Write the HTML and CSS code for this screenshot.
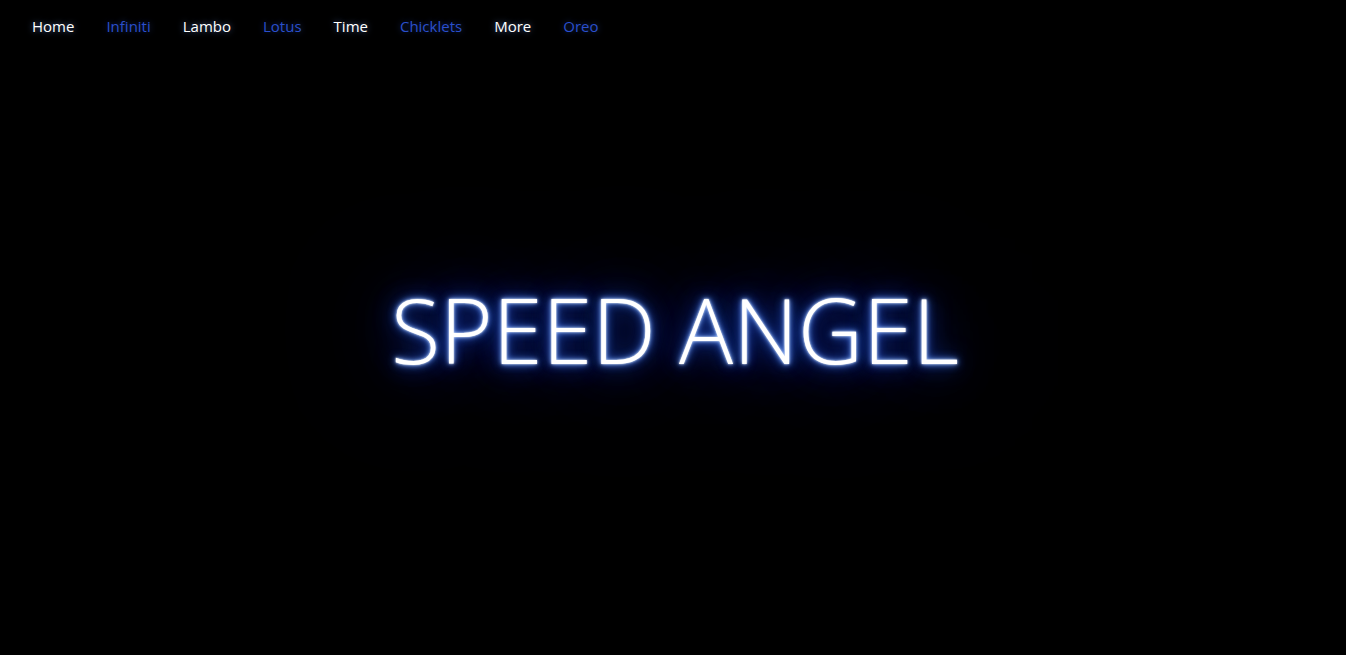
FILE: index.html
```html
<!DOCTYPE html>
<html lang="en">
<head>
<meta charset="utf-8">
<title>Speed Angel</title>
<link rel="stylesheet" href="styles.css">
</head>
<body>
<nav class="nav">
  <a class="nav-link white" href="#">Home</a>
  <a class="nav-link blue" href="#">Infiniti</a>
  <a class="nav-link white" href="#">Lambo</a>
  <a class="nav-link blue" href="#">Lotus</a>
  <a class="nav-link white" href="#">Time</a>
  <a class="nav-link blue" href="#">Chicklets</a>
  <a class="nav-link white" href="#">More</a>
  <a class="nav-link blue" href="#">Oreo</a>
</nav>
<main class="hero">
  <h1 class="title">SPEED ANGEL</h1>
</main>
</body>
</html>
```
FILE: styles.css
```css
html, body {
  margin: 0;
  padding: 0;
  height: 100%;
  background: #000;
  overflow: hidden;
}
body {
  font-family: "Open Sans", "Noto Sans", sans-serif;
  display: flex;
  flex-direction: column;
}
.nav {
  display: flex;
  gap: 32px;
  padding: 15px 32px 0;
  height: 40px;
  box-sizing: border-box;
}
.nav-link {
  font-size: 15px;
  line-height: 22px;
  text-decoration: none;
}
.white {
  color: #fff;
  text-shadow: 0 0 6px rgba(120, 160, 255, 0.6);
}
.blue {
  color: #2a4fcc;
  text-shadow: 0 0 6px rgba(60, 100, 220, 0.5);
}
.hero {
  flex: 1;
  display: flex;
  align-items: center;
  justify-content: center;
  padding-bottom: 38px;
  padding-left: 4px;
}
.title {
  margin: 0;
  font-weight: 300;
  font-size: 90px;
  color: #fff;
  letter-spacing: 0;
  text-shadow:
    0 0 2px #fff,
    0 0 5px #8ab4ff,
    0 0 10px #3a72f0,
    0 0 22px rgba(30, 80, 220, 0.9),
    0 0 50px rgba(20, 60, 190, 0.8),
    0 0 80px rgba(20, 55, 180, 0.8),
    0 0 120px rgba(20, 50, 170, 0.9);
}
```
